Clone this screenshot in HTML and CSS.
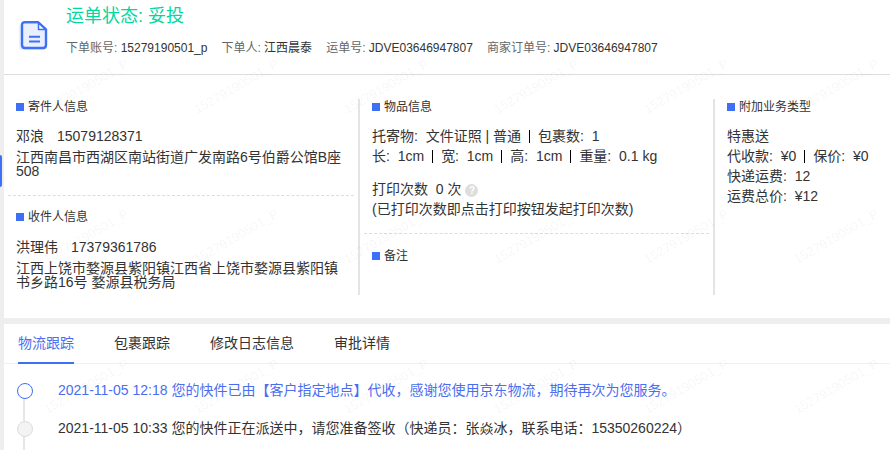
FILE: index.html

```html
<!DOCTYPE html>
<html lang="zh-CN">
<head>
<meta charset="utf-8"/>
<meta content="width=device-width, initial-scale=1.0" name="viewport"/>
<title>运单详情</title>
<link rel="stylesheet" href="styles.css">
</head>
<body>
<div class="side-tab"></div>

<div class="card">
  <div class="status">
    <svg class="status-icon" width="29" height="31" viewBox="0 0 29 31">
      <path d="M2 4 H20 L26 10 V30 H2 Q0 30 0 28 V6 Q0 4 2 4 Z" fill="#e9effd"/>
      <path d="M6 2.200 H19 L27 9.500 V25 Q27 28 24 28 H6 Q3 28 3 25 V5.200 Q3 2.200 6 2.200 Z" fill="none" stroke="#3e70f6" stroke-width="2.400" stroke-linejoin="round"/>
      <path d="M19.500 3 L26.500 9.500 H19.500 Z" fill="#fff" stroke="#3e70f6" stroke-width="1.500" stroke-linejoin="round"/>
      <path d="M10 16.700 H21 M10 21.600 H21" stroke="#3e70f6" stroke-width="2"/>
    </svg>
    <div>
      <div class="status-title">运单状态: 妥投</div>
      <div class="status-meta">
        <span><em>下单账号:</em> 15279190501_p</span>
        <span><em>下单人:</em> 江西晨泰</span>
        <span><em>运单号:</em> JDVE03646947807</span>
        <span><em>商家订单号:</em> JDVE03646947807</span>
      </div>
    </div>
  </div>

  <div class="info">
    <div class="col">
      <div class="block block-sender">
        <div class="block-title">寄件人信息</div>
        <div class="line"><span class="name">邓浪</span>15079128371</div>
        <div class="address">江西南昌市西湖区南站街道广发南路6号伯爵公馆B座508</div>
      </div>
      <div class="block block-receiver">
        <div class="block-title">收件人信息</div>
        <div class="line"><span class="name">洪理伟</span>17379361786</div>
        <div class="address">江西上饶市婺源县紫阳镇江西省上饶市婺源县紫阳镇书乡路16号 婺源县税务局</div>
      </div>
    </div>
    <div class="col">
      <div class="block block-goods">
        <div class="block-title">物品信息</div>
        <div class="line">托寄物:&nbsp; 文件证照 | 普通<i class="bar"></i>包裹数:&nbsp; 1</div>
        <div class="line">长:&nbsp; 1cm<i class="bar"></i>宽:&nbsp; 1cm<i class="bar"></i>高:&nbsp; 1cm<i class="bar"></i>重量:&nbsp; 0.1 kg</div>
        <div class="line print-count">打印次数 &nbsp;0 次<span class="help">?</span></div>
        <div class="line">(已打印次数即点击打印按钮发起打印次数)</div>
      </div>
      <div class="block block-note">
        <div class="block-title">备注</div>
      </div>
    </div>
    <div class="col">
      <div class="block block-extra">
        <div class="block-title">附加业务类型</div>
        <div class="line">特惠送</div>
        <div class="line">代收款:&nbsp; ¥0<i class="bar"></i>保价:&nbsp; ¥0</div>
        <div class="line">快递运费:&nbsp; 12</div>
        <div class="line">运费总价:&nbsp; ¥12</div>
      </div>
    </div>
  </div>
</div>

<div class="card track">
  <div class="tabs">
    <div class="tab active">物流跟踪</div>
    <div class="tab">包裹跟踪</div>
    <div class="tab">修改日志信息</div>
    <div class="tab">审批详情</div>
  </div>
  <ul class="timeline">
    <li class="current">2021-11-05 12:18 您的快件已由【客户指定地点】代收，感谢您使用京东物流，期待再次为您服务。</li>
    <li>2021-11-05 10:33 您的快件正在派送中，请您准备签收（快递员：张焱冰，联系电话：15350260224）</li>
  </ul>
</div>

<div class="watermark">
  <span>15279190501_P</span><span>15279190501_P</span><span>15279190501_P</span><span>15279190501_P</span><span>15279190501_P</span><span>15279190501_P</span>
  <span>15279190501_P</span><span>15279190501_P</span><span>15279190501_P</span><span>15279190501_P</span><span>15279190501_P</span><span>15279190501_P</span>
  <span>15279190501_P</span><span>15279190501_P</span><span>15279190501_P</span><span>15279190501_P</span><span>15279190501_P</span><span>15279190501_P</span>
</div>
</body>
</html>
```

FILE: styles.css

```css
* { box-sizing: border-box; }
html, body { height: 100%; overflow: hidden; }
body { margin: 0; padding-left: 4px; background: #eee; color: #333; font-family: "Liberation Sans", "Noto Sans CJK SC", sans-serif; font-size: 14px; position: relative; display: flex; flex-direction: column; }
.card { background: white; flex: none; }
.side-tab { position: absolute; left: 0; top: 155px; width: 2px; height: 32px; background: #3e70f6; border-radius: 0 3px 3px 0; }

.status { display: flex; height: 75px; border-bottom: 1px solid #ddd; padding: 6px 0 0 15px; }
.status-icon { margin: 14px 18px 0 0; flex: none; }
.status-title { color: #00d8a0; font-size: 18px; line-height: 20px; }
.status-meta { display: flex; gap: 14px; margin-top: 15px; font-size: 12px; line-height: 14px; color: #333; }
.status-meta em { font-style: normal; color: #666; }

.info { display: grid; grid-template-columns: 354px 355px 1fr; height: 243px; padding-top: 24px; }
.col { height: 196px; border-left: 2px solid #e4e4e4; }
.col:first-child { border-left: none; }
.block { padding: 0 12px; }
.block-title { display: flex; align-items: center; font-size: 12px; line-height: 16px; margin-bottom: 11px; }
.block-title::before { content: ""; width: 8px; height: 8px; margin-right: 4px; background: #3e70f6; }
.line { line-height: 20px; white-space: nowrap; }
.address { line-height: 14px; margin-top: 4px; }
.name { margin-right: 13px; }
.bar { display: inline-block; width: 1px; height: 13px; margin: 0 8px; background: #000; vertical-align: -2px; }

.block-sender { height: 97px; border-bottom: 1px dashed #ddd; margin-left: 4px; padding: 0 8px; width: 346px; }
.block-receiver { padding: 13px 14px 0 12px; }
.block-receiver .block-title { margin-bottom: 12px; }
.block-goods { height: 135px; margin: 0 4px; padding: 0 0 0 8px; border-bottom: 1px dashed #ddd; }
.print-count { margin-top: 13px; }
.help { display: inline-block; width: 13px; height: 13px; margin-left: 4px; border-radius: 50%; background: #ddd; color: white; font-size: 10px; font-weight: bold; line-height: 13px; text-align: center; }
.block-note { padding-top: 14px; }

.track { flex: 1; margin-top: 6px; overflow: hidden; }
.tabs { display: flex; gap: 40px; height: 40px; padding-left: 14px; border-bottom: 1px solid #f0f0f0; }
.tab { height: 40px; line-height: 38px; }
.tab.active { color: #4a6ef0; border-bottom: 2px solid #3e70f6; }

.timeline { list-style: none; margin: 0; padding: 16px 0 0 14px; }
.timeline li { position: relative; height: 38px; line-height: 20px; padding-left: 40px; }
.timeline li::before { content: ""; position: absolute; left: -1px; top: 3px; width: 14px; height: 14px; border: 1px solid #ddd; border-radius: 50%; background: #f3f3f3; z-index: 1; }
.timeline li::after { content: ""; position: absolute; left: 5px; top: 17px; width: 2px; height: 24px; background: #e6e6e6; }
.timeline li.current { color: #4a6ef0; }
.timeline li.current::before { border-color: #3e70f6; background: white; }

.watermark { position: absolute; inset: 0; overflow: hidden; display: grid; padding: 11px 0 0 11px; grid-template-columns: repeat(6, 150px); grid-auto-rows: 150px; pointer-events: none; }
.watermark span { display: flex; align-items: center; justify-content: center; transform: rotate(-30deg); font-size: 13px; color: rgba(0, 0, 0, 0.05); white-space: nowrap; }
```
